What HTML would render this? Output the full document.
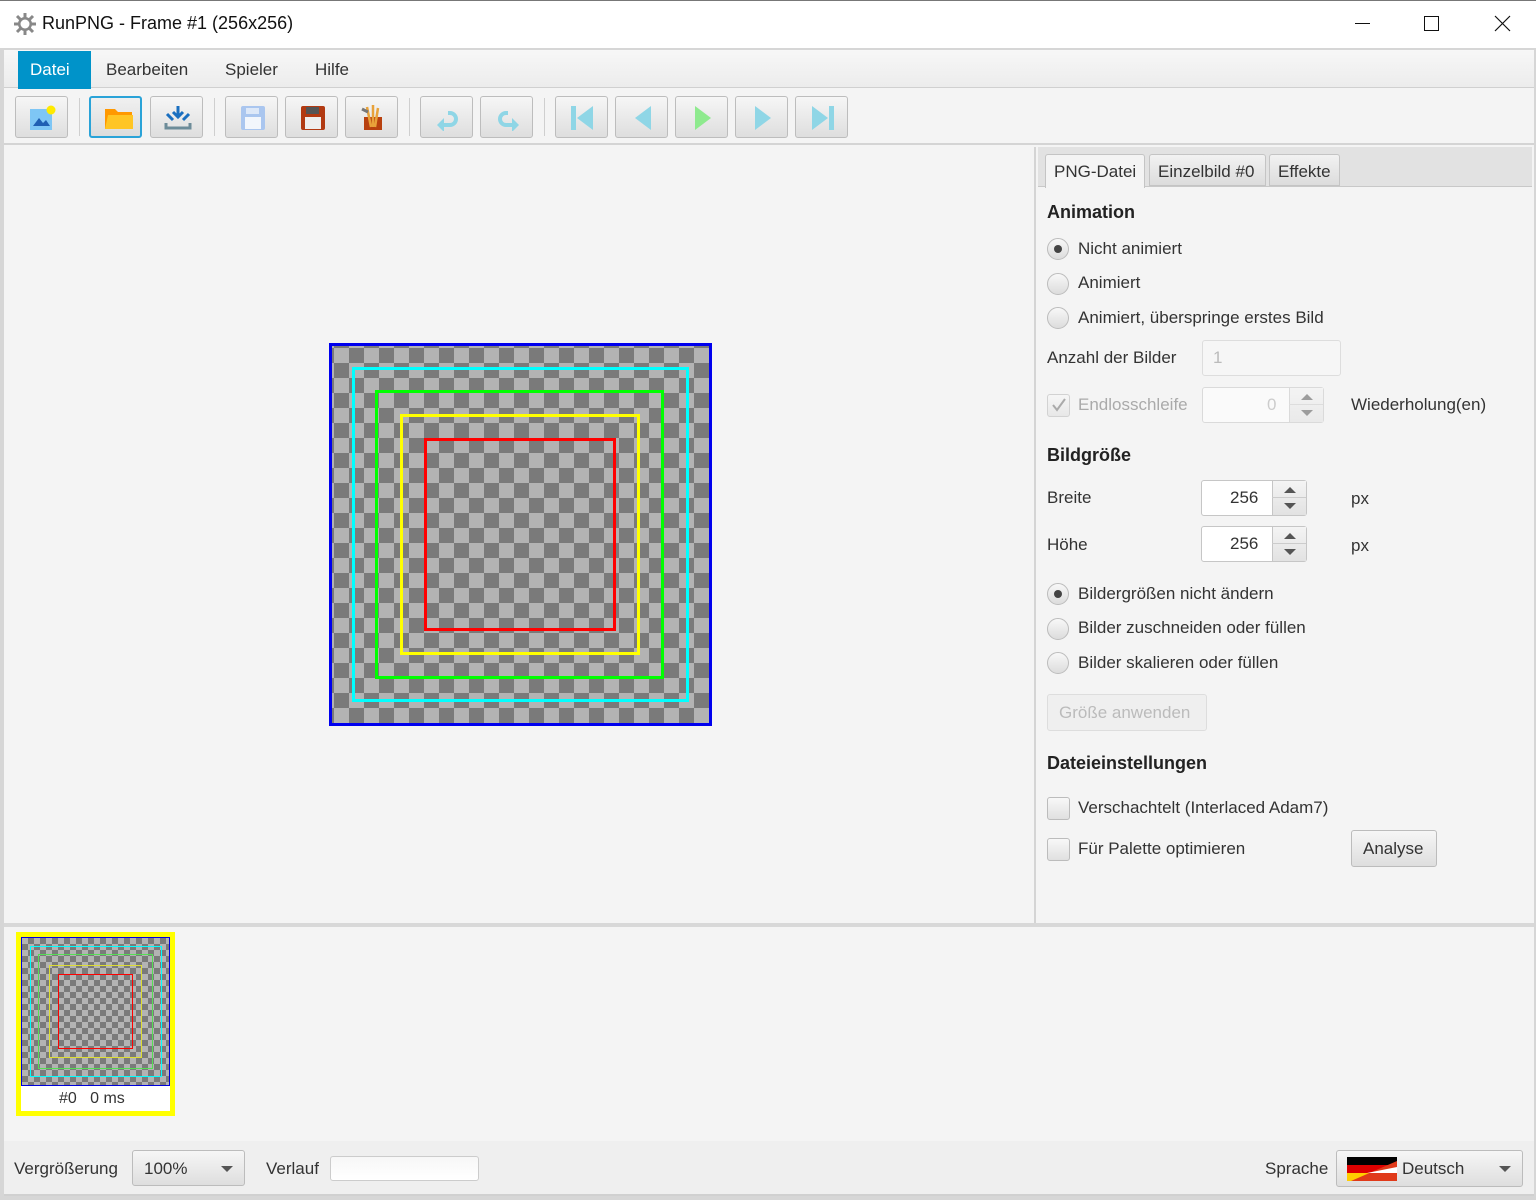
<!DOCTYPE html>
<html><head><meta charset="utf-8"><style>
*{box-sizing:border-box;margin:0;padding:0}
body{width:1536px;height:1200px;position:relative;background:#fff;font-family:"Liberation Sans","DejaVu Sans",sans-serif;font-size:17px;color:#333;overflow:hidden}
.a{position:absolute}
.btn{position:absolute;top:96px;width:53px;height:42px;border:1px solid #bdbdbd;border-radius:3px;background:linear-gradient(#f6f6f6,#dedede)}
.btn svg{position:absolute;left:13px;top:8px}
.sep{position:absolute;top:98px;width:1px;height:38px;background:#cfcfcf}
.radio{position:absolute;width:22px;height:22px;border-radius:50%;border:1px solid #bcbcbc;background:linear-gradient(#f8f8f8,#dcdcdc)}
.radio.on::after{content:"";position:absolute;left:6px;top:6px;width:8px;height:8px;border-radius:50%;background:#444}
.cb{position:absolute;width:23px;height:23px;border:1px solid #bcbcbc;border-radius:3px;background:linear-gradient(#f8f8f8,#e0e0e0)}
.lbl{position:absolute;white-space:nowrap}
.h{font-weight:bold;font-size:18px;color:#222}
.chk{background:repeating-conic-gradient(#7a7a7a 0 25%,#b3b3b3 0 50%) 0 0/30px 30px}
.spin{position:absolute;width:106px;height:36px;border:1px solid #c6c6c6;border-radius:3px;background:#fff}
.spin .b{position:absolute;right:0;top:0;width:34px;height:34px;border-left:1px solid #c6c6c6;background:linear-gradient(#f4f4f4,#e2e2e2)}
.spin .b::before{content:"";position:absolute;left:11px;top:6px;border:6px solid transparent;border-bottom:6px solid #555;border-top:0}
.spin .b::after{content:"";position:absolute;left:11px;top:22px;border:6px solid transparent;border-top:6px solid #555;border-bottom:0}
.spin .m{position:absolute;right:0;top:16px;width:34px;height:1px;background:#ccc}
</style></head><body>
<!-- title bar -->
<div class="a" style="left:0;top:0;width:1536px;height:48px;background:#fff;border-top:1px solid #777"></div>
<svg class="a" style="left:13px;top:12px" width="24" height="24" viewBox="0 0 24 24"><g fill="#888"><circle cx="12" cy="12" r="7"/><g stroke="#888" stroke-width="3"><line x1="12" y1="1" x2="12" y2="23"/><line x1="1" y1="12" x2="23" y2="12"/><line x1="4" y1="4" x2="20" y2="20"/><line x1="20" y1="4" x2="4" y2="20"/></g></g><circle cx="12" cy="12" r="4.5" fill="#fff"/></svg>
<div class="lbl" style="left:42px;top:13px;font-size:18px;color:#111">RunPNG - Frame #1 (256x256)</div>
<div class="a" style="left:1355px;top:23px;width:15px;height:1px;background:#111"></div>
<div class="a" style="left:1424px;top:16px;width:15px;height:15px;border:1px solid #111"></div>
<svg class="a" style="left:1494px;top:15px" width="17" height="17"><path d="M1 1L16 16M16 1L1 16" stroke="#111" stroke-width="1.2"/></svg>
<!-- app frame -->
<div class="a" style="left:0;top:48px;width:1536px;height:1152px;background:#d6d6d6"></div>
<div class="a" style="left:4px;top:50px;width:1530px;height:1146px;background:#f4f4f4"></div>
<!-- menu -->
<div class="a" style="left:4px;top:50px;width:1530px;height:38px;background:linear-gradient(#f7f7f7,#ececec);border-bottom:1px solid #d0d0d0"></div>
<div class="a" style="left:18px;top:51px;width:73px;height:38px;background:#0093c9"></div>
<div class="lbl" style="left:30px;top:60px;color:#fff">Datei</div>
<div class="lbl" style="left:106px;top:60px;color:#333">Bearbeiten</div>
<div class="lbl" style="left:225px;top:60px;color:#333">Spieler</div>
<div class="lbl" style="left:315px;top:60px;color:#333">Hilfe</div>
<!-- toolbar -->
<div class="a" style="left:4px;top:89px;width:1530px;height:56px;background:#f4f4f4;border-bottom:2px solid #d4d4d4"></div>
<div class="btn" style="left:15px"><svg width="28" height="26"><rect x="1" y="4" width="22" height="21" fill="#7ec6f5"/><path d="M4 21l6-8 4 5 3-3 4 6z" fill="#1f5fb3"/><circle cx="22" cy="5" r="4.5" fill="#ffea00"/></svg></div>
<div class="sep" style="left:79px"></div>
<div class="btn" style="left:89px;border:2px solid #2aa3d8;background:linear-gradient(#f0f0f0,#dcdcdc)"><svg width="30" height="26"><path d="M1 3h10l3 3h14v17H1z" fill="#ff9800"/><path d="M4 9h25v14H1z" fill="#ffc524"/></svg></div>
<div class="btn" style="left:150px"><svg width="28" height="26"><path d="M14 1v11M9 7l5 5 5-5" stroke="#1a6fc0" stroke-width="3" fill="none"/><path d="M3 9l6 6M25 9l-6 6" stroke="#1a6fc0" stroke-width="3"/><path d="M2 18v5h24v-5" stroke="#6d8c99" stroke-width="3" fill="none"/></svg></div>
<div class="sep" style="left:214px"></div>
<div class="btn" style="left:225px"><svg width="28" height="26"><rect x="2" y="1" width="24" height="24" rx="2" fill="#aac6ef"/><rect x="7" y="3" width="13" height="6" fill="#dde8f8"/><rect x="6" y="12" width="16" height="12" fill="#f2f6fc"/></svg></div>
<div class="btn" style="left:285px"><svg width="28" height="26"><rect x="2" y="1" width="24" height="24" rx="2" fill="#b23a12"/><rect x="7" y="2" width="13" height="7" fill="#555"/><rect x="6" y="12" width="16" height="12" fill="#eee"/></svg></div>
<div class="btn" style="left:345px"><svg width="28" height="26"><rect x="5" y="12" width="18" height="13" fill="#b8410f"/><path d="M8 2l4 20M14 0v22M19 3l-3 19" stroke="#e8a23a" stroke-width="2.5"/><path d="M3 4l6 3" stroke="#777" stroke-width="3"/></svg></div>
<div class="sep" style="left:409px"></div>
<div class="btn" style="left:420px"><svg width="28" height="26"><path d="M8 20h8a6 6 0 0 0 0-12h-2" stroke="#8fd6e6" stroke-width="4" fill="none"/><path d="M3 20l7-7v14z" fill="#8fd6e6"/></svg></div>
<div class="btn" style="left:480px"><svg width="28" height="26"><path d="M20 20h-8a6 6 0 0 1 0-12h2" stroke="#8fd6e6" stroke-width="4" fill="none"/><path d="M25 20l-7-7v14z" fill="#8fd6e6"/></svg></div>
<div class="sep" style="left:544px"></div>
<div class="btn" style="left:555px"><svg width="28" height="26"><rect x="2" y="1" width="5" height="24" fill="#8fd6e6"/><path d="M24 1v24L8 13z" fill="#8fd6e6"/></svg></div>
<div class="btn" style="left:615px"><svg width="28" height="26"><path d="M22 1v24L6 13z" fill="#8fd6e6"/></svg></div>
<div class="btn" style="left:675px"><svg width="28" height="26"><path d="M6 1v24l16-12z" fill="#8eea8e"/></svg></div>
<div class="btn" style="left:735px"><svg width="28" height="26"><path d="M6 1v24l16-12z" fill="#8fd6e6"/></svg></div>
<div class="btn" style="left:795px"><svg width="28" height="26"><path d="M3 1v24l16-12z" fill="#8fd6e6"/><rect x="20" y="1" width="5" height="24" fill="#8fd6e6"/></svg></div>
<!-- main canvas area -->
<div class="a" style="left:4px;top:147px;width:1032px;height:776px;background:#f4f4f4;border-right:2px solid #d4d4d4"></div>
<div class="a chk" style="left:329px;top:343px;width:383px;height:383px;border:3px solid #0000ee;background-position:2px 2px"></div>
<div class="a" style="left:352px;top:367px;width:337px;height:335px;border:3px solid #00ffff"></div>
<div class="a" style="left:375px;top:390px;width:289px;height:289px;border:3px solid #00ff00"></div>
<div class="a" style="left:400px;top:414px;width:240px;height:241px;border:3px solid #ffff00"></div>
<div class="a" style="left:424px;top:438px;width:192px;height:193px;border:3px solid #ff0000"></div>
<!-- right panel -->
<div class="a" style="left:1038px;top:147px;width:494px;height:40px;background:#e2e2e2;border-bottom:1px solid #c8c8c8"></div>
<div class="a" style="left:1045px;top:154px;width:100px;height:34px;background:#f4f4f4;border:1px solid #c4c4c4;border-bottom:none;border-radius:3px 3px 0 0"></div>
<div class="a" style="left:1149px;top:154px;width:117px;height:32px;background:linear-gradient(#f2f2f2,#dcdcdc);border:1px solid #c4c4c4;border-radius:3px 3px 0 0"></div>
<div class="a" style="left:1269px;top:154px;width:71px;height:32px;background:linear-gradient(#f2f2f2,#dcdcdc);border:1px solid #c4c4c4;border-radius:3px 3px 0 0"></div>
<div class="lbl" style="left:1054px;top:162px">PNG-Datei</div>
<div class="lbl" style="left:1158px;top:162px">Einzelbild #0</div>
<div class="lbl" style="left:1278px;top:162px">Effekte</div>
<div class="lbl h" style="left:1047px;top:202px">Animation</div>
<div class="radio on" style="left:1047px;top:238px"></div><div class="lbl" style="left:1078px;top:239px">Nicht animiert</div>
<div class="radio" style="left:1047px;top:273px"></div><div class="lbl" style="left:1078px;top:273px">Animiert</div>
<div class="radio" style="left:1047px;top:307px"></div><div class="lbl" style="left:1078px;top:308px">Animiert, überspringe erstes Bild</div>
<div class="lbl" style="left:1047px;top:348px">Anzahl der Bilder</div>
<div class="a" style="left:1202px;top:340px;width:139px;height:36px;border:1px solid #ddd;border-radius:3px;background:#f6f6f6"></div>
<div class="lbl" style="left:1213px;top:348px;color:#bbb">1</div>
<div class="cb" style="left:1047px;top:394px;opacity:.6"></div>
<svg class="a" style="left:1050px;top:396px" width="18" height="18"><path d="M3 9l4 5 8-11" stroke="#aaa" stroke-width="2" fill="none"/></svg>
<div class="lbl" style="left:1078px;top:395px;color:#aaa">Endlosschleife</div>
<div class="spin" style="left:1202px;top:387px;width:122px;opacity:.55"><div class="b"></div><div class="m"></div></div>
<div class="lbl" style="left:1267px;top:395px;color:#ccc">0</div>
<div class="lbl" style="left:1351px;top:395px">Wiederholung(en)</div>
<div class="lbl h" style="left:1047px;top:445px">Bildgröße</div>
<div class="lbl" style="left:1047px;top:488px">Breite</div>
<div class="spin" style="left:1201px;top:480px"><div class="b"></div><div class="m"></div></div>
<div class="lbl" style="left:1230px;top:488px">256</div>
<div class="lbl" style="left:1351px;top:489px">px</div>
<div class="lbl" style="left:1047px;top:535px">Höhe</div>
<div class="spin" style="left:1201px;top:526px"><div class="b"></div><div class="m"></div></div>
<div class="lbl" style="left:1230px;top:534px">256</div>
<div class="lbl" style="left:1351px;top:536px">px</div>
<div class="radio on" style="left:1047px;top:583px"></div><div class="lbl" style="left:1078px;top:584px">Bildergrößen nicht ändern</div>
<div class="radio" style="left:1047px;top:618px"></div><div class="lbl" style="left:1078px;top:618px">Bilder zuschneiden oder füllen</div>
<div class="radio" style="left:1047px;top:652px"></div><div class="lbl" style="left:1078px;top:653px">Bilder skalieren oder füllen</div>
<div class="a" style="left:1047px;top:694px;width:160px;height:37px;border:1px solid #ddd;border-radius:3px;background:#efefef"></div>
<div class="lbl" style="left:1059px;top:703px;color:#bbb">Größe anwenden</div>
<div class="lbl h" style="left:1047px;top:753px">Dateieinstellungen</div>
<div class="cb" style="left:1047px;top:797px"></div><div class="lbl" style="left:1078px;top:798px">Verschachtelt (Interlaced Adam7)</div>
<div class="cb" style="left:1047px;top:838px"></div><div class="lbl" style="left:1078px;top:839px">Für Palette optimieren</div>
<div class="a" style="left:1351px;top:830px;width:86px;height:37px;border:1px solid #bcbcbc;border-radius:3px;background:linear-gradient(#f6f6f6,#dedede)"></div>
<div class="lbl" style="left:1363px;top:839px">Analyse</div>
<!-- divider -->
<div class="a" style="left:4px;top:923px;width:1530px;height:4px;background:#d8d8d8"></div>
<!-- thumbnail -->
<div class="a" style="left:16px;top:932px;width:159px;height:184px;border:5px solid #ffff00;background:#fff"></div>
<div class="a chk" style="left:21px;top:937px;width:149px;height:149px;border:1px solid #0000dd;background-size:12px 12px"></div>
<div class="a" style="left:30px;top:946px;width:132px;height:131px;border:1px solid #00ffff"></div>
<div class="a" style="left:38px;top:954px;width:115px;height:115px;border:1px solid #55dd55"></div>
<div class="a" style="left:49px;top:965px;width:93px;height:93px;border:1px solid #dddd33"></div>
<div class="a" style="left:58px;top:974px;width:75px;height:75px;border:1px solid #ff0000"></div>
<div class="lbl" style="left:59px;top:1090px;font-size:16px">#0&nbsp;&nbsp;&nbsp;0 ms</div>
<!-- status bar -->
<div class="a" style="left:4px;top:1141px;width:1530px;height:55px;background:#efefef;border-bottom:2px solid #d0d0d0"></div>
<div class="lbl" style="left:14px;top:1159px">Vergrößerung</div>
<div class="a" style="left:132px;top:1150px;width:113px;height:36px;border:1px solid #bcbcbc;border-radius:3px;background:linear-gradient(#f6f6f6,#dedede)"></div>
<div class="lbl" style="left:144px;top:1159px">100%</div>
<div class="a" style="left:221px;top:1166px;border:6px solid transparent;border-top:6px solid #555;border-bottom:0"></div>
<div class="lbl" style="left:266px;top:1159px">Verlauf</div>
<div class="a" style="left:330px;top:1156px;width:149px;height:25px;border:1px solid #ccc;border-radius:3px;background:linear-gradient(#f7f7f7,#fff)"></div>
<div class="lbl" style="left:1265px;top:1159px">Sprache</div>
<div class="a" style="left:1336px;top:1150px;width:187px;height:37px;border:1px solid #bcbcbc;border-radius:3px;background:linear-gradient(#f6f6f6,#dedede)"></div>
<svg class="a" style="left:1347px;top:1157px" width="50" height="24"><rect width="50" height="8" fill="#000"/><rect y="8" width="50" height="8" fill="#dd0000"/><rect y="16" width="50" height="8" fill="#ffce00"/><path d="M50 4V24H4z" fill="#e03a1a"/><path d="M50 10V16H20z" fill="#fff" /></svg>
<div class="lbl" style="left:1402px;top:1159px">Deutsch</div>
<div class="a" style="left:1499px;top:1166px;border:6px solid transparent;border-top:6px solid #555;border-bottom:0"></div>
</body></html>
